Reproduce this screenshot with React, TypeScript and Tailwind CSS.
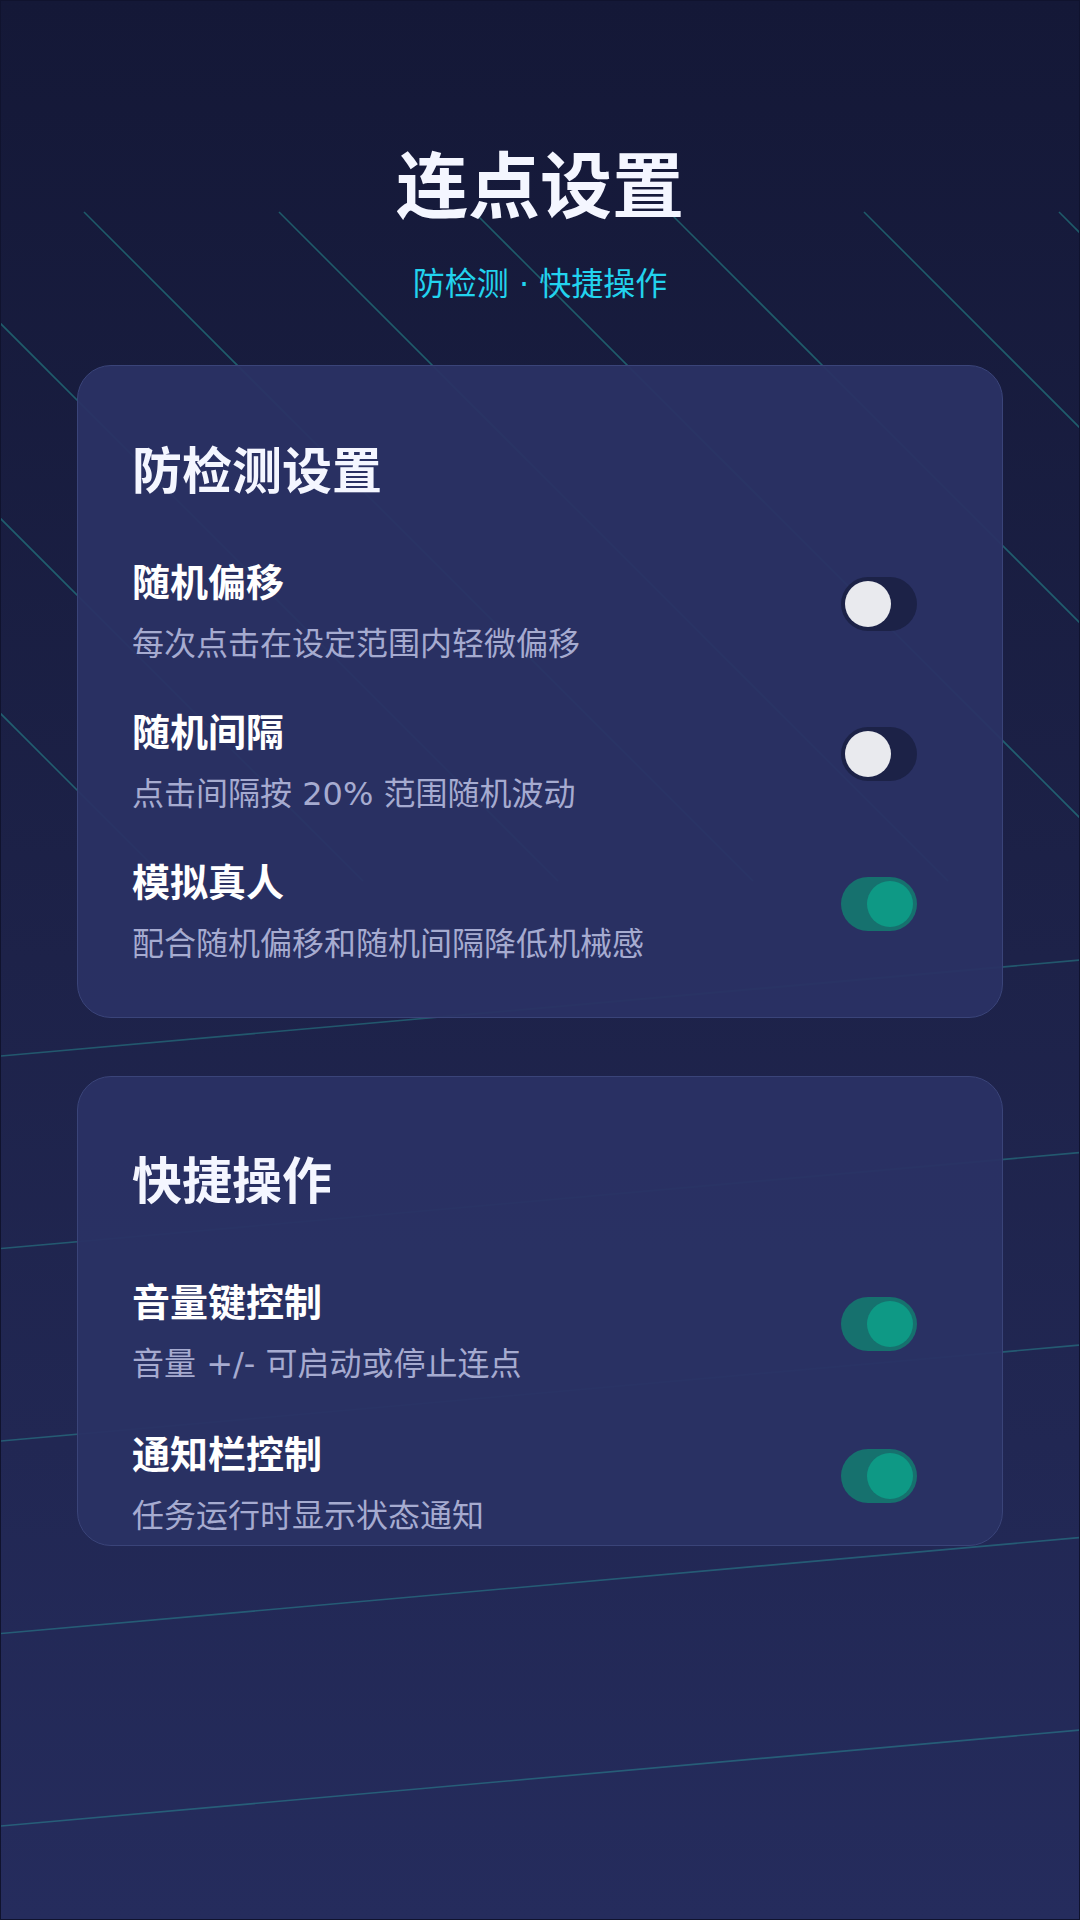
import { useState } from 'react'

const fontStack = "font-['DejaVu_Sans','Noto_Sans_CJK_SC',sans-serif]"

interface SettingItem {
  id: string
  label: string
  desc: string
  on: boolean
}

const antiDetect: SettingItem[] = [
  { id: 'offset', label: '随机偏移', desc: '每次点击在设定范围内轻微偏移', on: false },
  { id: 'interval', label: '随机间隔', desc: '点击间隔按 20% 范围随机波动', on: false },
  { id: 'human', label: '模拟真人', desc: '配合随机偏移和随机间隔降低机械感', on: true },
]

const shortcuts: SettingItem[] = [
  { id: 'volume', label: '音量键控制', desc: '音量 +/- 可启动或停止连点', on: true },
  { id: 'notify', label: '通知栏控制', desc: '任务运行时显示状态通知', on: true },
]

function BackgroundLines() {
  const diagonals = [-3, -2, -1, 0, 1, 2, 3, 4, 5].map(k => 83 + 195 * k)
  const flats = [0, 1, 2, 3, 4].map(j => 1055 + 192.5 * j)
  return (
    <svg className="absolute inset-0 pointer-events-none" width="1080" height="1920" viewBox="0 0 1080 1920">
      {diagonals.map(x => (
        <line key={x} x1={x} y1={211} x2={x + 669} y2={880} stroke="#2dd4bf" strokeOpacity={0.35} strokeWidth={1.6} />
      ))}
      {flats.map(y => (
        <line key={y} x1={0} y1={y} x2={1080} y2={y - 96} stroke="#2dd4bf" strokeOpacity={0.3} strokeWidth={1.6} />
      ))}
    </svg>
  )
}

function Toggle({ on, onClick }: { on: boolean; onClick: () => void }) {
  return (
    <button
      type="button"
      onClick={onClick}
      className={`mt-[13px] shrink-0 w-[76px] h-[54px] rounded-full p-[4px] flex items-center transition-colors ${on ? 'bg-[#16716e] justify-end' : 'bg-[#1c2247] justify-start'}`}
    >
      <span className={`block w-[46px] h-[46px] rounded-full ${on ? 'bg-[#0e9985]' : 'bg-[#e9eaee]'}`} />
    </button>
  )
}

function SettingRow({ item, onToggle }: { item: SettingItem; onToggle: () => void }) {
  return (
    <div className="flex items-start justify-between">
      <div className="flex flex-col">
        <p className="text-[38px] leading-none font-bold text-white">{item.label}</p>
        <p className="mt-[26px] text-[32px] leading-none text-[#a6abd0]">{item.desc}</p>
      </div>
      <Toggle on={item.on} onClick={onToggle} />
    </div>
  )
}

function SettingsCard({ title, items, onToggle, className }: {
  title: string
  items: SettingItem[]
  onToggle: (id: string) => void
  className: string
}) {
  return (
    <section className={`mx-[76px] rounded-[34px] border border-[#3a4479] bg-[#2a3164]/95 pl-[54px] pr-[85px] ${className}`}>
      <h2 className="text-[50px] leading-none font-bold text-[#f4f6ff]">{title}</h2>
      <div className="flex flex-col gap-[var(--row-gap)] mt-[var(--gap-top)]">
        {items.map(item => (
          <SettingRow key={item.id} item={item} onToggle={() => onToggle(item.id)} />
        ))}
      </div>
    </section>
  )
}

export default function App() {
  const [first, setFirst] = useState(antiDetect)
  const [second, setSecond] = useState(shortcuts)

  const flip = (list: SettingItem[], id: string) => list.map(i => (i.id === id ? { ...i, on: !i.on } : i))

  return (
    <div className={`relative w-[1080px] h-[1920px] overflow-hidden border border-[#10132e] bg-gradient-to-b from-[#141837] via-[#1d2249] to-[#252c5d] ${fontStack}`}>
      <BackgroundLines />

      <div className="relative flex flex-col">
        {/* 顶部标题 */}
        <header className="flex flex-col items-center pt-[150px]">
          <h1 className="text-[72px] leading-none font-bold text-[#f4f6ff]">连点设置</h1>
          <p className="mt-[45px] text-[32px] leading-none text-[#22d3ee]">防检测 · 快捷操作</p>
        </header>

        {/* 防检测设置 */}
        <SettingsCard
          title="防检测设置"
          items={first}
          onToggle={id => setFirst(l => flip(l, id))}
          className="mt-[65px] pt-[81px] pb-[57px] [--gap-top:67px] [--row-gap:54px]"
        />

        {/* 快捷操作 */}
        <SettingsCard
          title="快捷操作"
          items={second}
          onToggle={id => setSecond(l => flip(l, id))}
          className="mt-[58px] pt-[80px] h-[470px] overflow-hidden [--gap-top:77px] [--row-gap:56px]"
        />
      </div>
    </div>
  )
}
